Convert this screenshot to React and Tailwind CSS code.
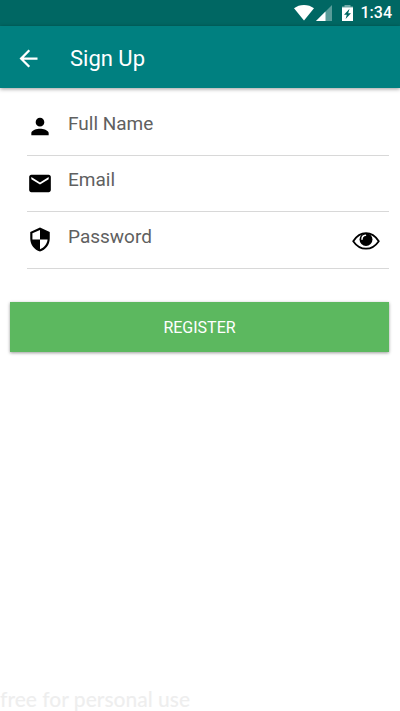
import { useState } from "react";

function StatusBar() {
  return (
    <div className="flex h-[26px] items-center justify-end bg-[#006763] pr-2 text-white">
      <svg className="h-4 w-5" viewBox="0 0 20 16" aria-hidden="true">
        <path d="M10 15.5 0 3.3C2.8 1.2 6.2 0 10 0s7.200 1.200 10 3.300z" fill="currentColor" />
      </svg>
      <svg className="ml-0.5 h-4 w-4" viewBox="0 0 16 16" aria-hidden="true">
        <path d="M0 16 16 0v16z" fill="currentColor" opacity="0.35" />
        <path d="M0 16 9.500 6.500V16z" fill="currentColor" />
      </svg>
      <svg className="ml-2.5 h-4 w-[11px]" viewBox="0 0 11 16" aria-hidden="true">
        <path d="M2.500 0h6v1.500H11V5H0V1.500h2.500z" fill="currentColor" opacity="0.45" />
        <path d="M0 2.500h11V16H0z" fill="currentColor" />
        <path d="M7.500 3.800 2 9.800h2.800L3.600 14 9 8.200H6.200z" fill="#006763" />
      </svg>
      <span className="ml-2 font-[Roboto,sans-serif] text-base font-medium leading-6">1:34</span>
    </div>
  );
}

function PersonIcon() {
  return (
    <svg className="size-[27px]" viewBox="0 0 24 24" fill="currentColor" aria-hidden="true">
      <path d="M12 12c2.210 0 4-1.790 4-4s-1.790-4-4-4-4 1.790-4 4 1.790 4 4 4zm0 2c-2.670 0-8 1.340-8 4v2h16v-2c0-2.660-5.330-4-8-4z" />
    </svg>
  );
}

function MailIcon() {
  return (
    <svg className="size-[27px]" viewBox="0 0 24 24" fill="currentColor" aria-hidden="true">
      <path d="M20 4H4c-1.100 0-1.990.9-1.990 2L2 18c0 1.100.9 2 2 2h16c1.100 0 2-.9 2-2V6c0-1.100-.9-2-2-2zm0 4l-8 5-8-5V6l8 5 8-5v2z" />
    </svg>
  );
}

function ShieldIcon() {
  return (
    <svg className="size-[27px]" viewBox="0 0 24 24" fill="currentColor" aria-hidden="true">
      <path d="M12 1L3 5v6c0 5.550 3.840 10.740 9 12 5.160-1.260 9-6.450 9-12V5l-9-4zm0 10.990h7c-.53 4.120-3.280 7.790-7 8.940V12H5V6.300l7-3.110v8.800z" />
    </svg>
  );
}

function EyeIcon() {
  return (
    <svg className="h-[18px] w-7" viewBox="0 0 28 18" aria-hidden="true">
      <path
        d="M1.200 9.200C4.500 4.200 8.800 1.200 14 1.200s9.500 3 12.800 8C23.500 14 19.200 16.700 14 16.700S4.500 14 1.200 9.200z"
        fill="white"
        stroke="black"
        strokeWidth="1.800"
        strokeLinejoin="round"
      />
      <circle cx="14" cy="7.500" r="6.500" fill="black" />
      <path d="M10 7.200c0-2.200 1.400-3.700 3.500-3.900" fill="none" stroke="white" strokeWidth="1.500" strokeLinecap="round" />
    </svg>
  );
}

function Field({ id, label, type, icon, children }) {
  return (
    <div className="flex border-b border-[#d8d8d8]">
      <label htmlFor={id} aria-label={label} className="flex w-[26px] shrink-0 justify-center pt-[14px]">
        {icon}
      </label>
      <input
        id={id}
        type={type}
        placeholder={label}
        className="ml-[15px] h-12 min-w-0 flex-1 bg-transparent font-[Roboto,sans-serif] text-[19px] leading-6 outline-none placeholder:text-[#606060] placeholder:opacity-100"
      />
      {children}
    </div>
  );
}

export default function App() {
  const [visible, setVisible] = useState(false);
  return (
    <div className="flex min-h-screen flex-col bg-white font-[Roboto,sans-serif] text-black">
      <StatusBar />
      <header className="flex h-[62px] items-center bg-[#008080] px-[15px] pt-0.5 text-white shadow-[0_1px_4px_rgba(0,0,0,0.4)]">
        <button type="button" aria-label="Back" className="flex size-[27px] items-center justify-center">
          <svg className="size-[27px]" viewBox="0 0 24 24" fill="currentColor" aria-hidden="true">
            <path d="M20 11H7.830l5.590-5.590L12 4l-8 8 8 8 1.410-1.410L7.830 13H20v-2z" />
          </svg>
        </button>
        <h1 className="ml-7 pt-0.5 text-[22px] leading-7">Sign Up</h1>
      </header>
      <form className="pt-[11px] pr-[11px] pl-2.5" onSubmit={(e) => e.preventDefault()}>
        <div className="ml-[17px] grid h-[170px] grid-rows-3">
          <Field id="name" label="Full Name" type="text" icon={<PersonIcon />} />
          <Field id="email" label="Email" type="email" icon={<MailIcon />} />
          <Field id="password" label="Password" type={visible ? "text" : "password"} icon={<ShieldIcon />}>
            <button
              type="button"
              aria-label="Show password"
              onClick={() => setVisible(!visible)}
              className="mr-[9px] flex h-14 w-7 items-center justify-center pt-0.5"
            >
              <EyeIcon />
            </button>
          </Field>
        </div>
        <button
          type="submit"
          className="mt-[33px] h-[50px] w-full bg-[#5cb85f] pt-0.5 text-base text-white shadow-[0_1px_3px_rgba(0,0,0,0.4)]"
        >
          REGISTER
        </button>
      </form>
      <p className="mt-auto font-[Lato,sans-serif] text-[21px] leading-6 font-medium text-[#eeeeee]">free for personal use</p>
    </div>
  );
}
